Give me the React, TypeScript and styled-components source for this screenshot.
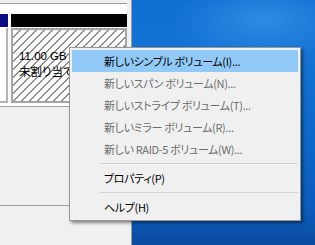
import React from "react";
import styled, { createGlobalStyle } from "styled-components";

const Global = createGlobalStyle`
  html, body { margin: 0; padding: 0; }
  body {
    width: 315px;
    height: 245px;
    overflow: hidden;
    font-family: "Noto Sans CJK JP", "Noto Sans", sans-serif;
  }
`;

const Screen = styled.div`
  position: relative;
  display: flex;
  width: 315px;
  height: 245px;
  overflow: hidden;
`;

const Window = styled.div`
  display: flex;
  width: 132px;
  background: #f0f0f0;
`;

const Content = styled.div`
  flex: 1;
  display: flex;
  flex-direction: column;
  min-width: 0;
`;

const Frame = styled.div`
  width: 4px;
  background: #f0f0f0;
  border-right: 1px solid #9a9a9a;
`;

const TopBand = styled.div`
  height: 3px;
  background: #f0f0f0;
  border-bottom: 1px solid #a0a0a0;
`;

const DiskPane = styled.div`
  background: #ffffff;
  padding: 10px 0 3px 0;
`;

const DiskRow = styled.div`
  display: flex;
  gap: 3px;
`;

const Partition = styled.div<{ $width?: number }>`
  display: flex;
  flex-direction: column;
  gap: 1px;
  ${(p) => (p.$width ? `width: ${p.$width}px;` : "flex: 1;")}
`;

const PartHeader = styled.div<{ $color: string }>`
  height: 13px;
  background: ${(p) => p.$color};
`;

const PartBody = styled.div`
  height: 73px;
  background: #ffffff;
  border-right: 2px solid #b4b4b4;
  border-bottom: 2px solid #b4b4b4;
`;

const HatchBody = styled.div`
  border: 2px solid #a6a6a6;
  background: repeating-linear-gradient(
    135deg,
    #ffffff 0px,
    #ffffff 4.6px,
    #8e8e8e 4.6px,
    #8e8e8e 5.66px
  );
  padding: 20px 0 0 6px;
  box-sizing: border-box;
  height: 75px;
  color: #000;
  white-space: nowrap;
  overflow: hidden;
`;

const SizeText = styled.div`
  font-family: "Liberation Sans", Arial, sans-serif;
  font-size: 11.5px;
  line-height: 13px;
`;

const StatusText = styled.div`
  font-size: 11.5px;
  line-height: 17px;
  font-feature-settings: "palt";
`;

const LowerPane = styled.div`
  flex: 1;
  display: flex;
  flex-direction: column;
  border-top: 1px solid #a0a0a0;
`;

const LowerSection = styled.div<{ $height?: number }>`
  ${(p) => (p.$height ? `height: ${p.$height}px; border-bottom: 1px solid #a0a0a0;` : "flex: 1;")}
  background: #f0f0f0;
`;

const Desktop = styled.div`
  flex: 1;
  background:
    radial-gradient(ellipse 90px 40px at 72% 8%, rgba(70, 160, 240, 0.55), rgba(70, 160, 240, 0) 100%),
    linear-gradient(180deg, #0f6fd0 0%, #1474d5 20%, #0d68cb 55%, #0b5cbd 85%, #0a4c9f 100%);
`;

const Menu = styled.div`
  position: absolute;
  left: 69px;
  top: 47px;
  width: 232px;
  box-sizing: border-box;
  padding: 2px;
  background: #f0f0f0;
  border: 1px solid #979797;
  box-shadow: 2px 2px 3px rgba(0, 0, 0, 0.45);
  display: flex;
  flex-direction: column;
`;

const Item = styled.div<{ $disabled?: boolean; $active?: boolean }>`
  height: 22px;
  display: flex;
  align-items: center;
  padding-left: 32px;
  font-size: 11px;
  letter-spacing: -0.35px;
  font-feature-settings: "palt";
  white-space: nowrap;
  color: ${(p) => (p.$disabled ? "#6d6d6d" : "#000000")};
  background: ${(p) => (p.$active ? "#91c9f7" : "transparent")};
`;

const Separator = styled.div`
  height: 7px;
  display: flex;
  align-items: center;
  padding-left: 28px;
  &::after {
    content: "";
    flex: 1;
    height: 1px;
    background: #d2d2d2;
  }
`;

const items: { label: string; disabled?: boolean; active?: boolean; sepAfter?: boolean }[] = [
  { label: "新しいシンプル ボリューム(I)...", active: true },
  { label: "新しいスパン ボリューム(N)...", disabled: true },
  { label: "新しいストライプ ボリューム(T)...", disabled: true },
  { label: "新しいミラー ボリューム(R)...", disabled: true },
  { label: "新しい RAID-5 ボリューム(W)...", disabled: true, sepAfter: true },
  { label: "プロパティ(P)", sepAfter: true },
  { label: "ヘルプ(H)" },
];

export default function App() {
  return (
    <>
      <Global />
      <Screen>
        <Window>
          <Content>
            <TopBand />
            <DiskPane>
              <DiskRow>
                <Partition $width={8}>
                  <PartHeader $color="#0b0b84" />
                  <PartBody />
                </Partition>
                <Partition>
                  <PartHeader $color="#000000" />
                  <HatchBody>
                    <SizeText>11.00 GB</SizeText>
                    <StatusText>未割り当て</StatusText>
                  </HatchBody>
                </Partition>
              </DiskRow>
            </DiskPane>
            <LowerPane>
              <LowerSection $height={98} />
              <LowerSection />
            </LowerPane>
          </Content>
          <Frame />
        </Window>
        <Desktop />
        <Menu>
          {items.map((it) => (
            <React.Fragment key={it.label}>
              <Item $disabled={it.disabled} $active={it.active}>
                {it.label}
              </Item>
              {it.sepAfter && <Separator />}
            </React.Fragment>
          ))}
        </Menu>
      </Screen>
    </>
  );
}
